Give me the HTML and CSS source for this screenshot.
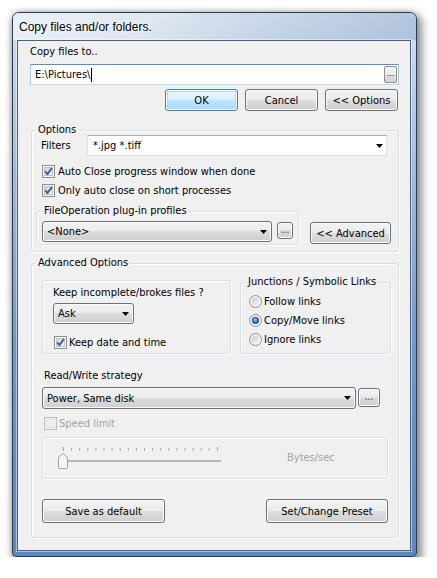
FILE: index.html
```html
<!DOCTYPE html>
<html>
<head>
<meta charset="utf-8">
<title>Copy files and/or folders.</title>
<link rel="stylesheet" href="styles.css">
</head>
<body>
<svg class="defs" width="0" height="0" aria-hidden="true">
  <defs>
    <linearGradient id="cbin" x1="0" y1="0" x2="1" y2="1">
      <stop offset="0" stop-color="#cdd1d6"/>
      <stop offset="1" stop-color="#f7f7f7"/>
    </linearGradient>
    <linearGradient id="rdbg" x1="0" y1="0" x2="1" y2="1">
      <stop offset="0" stop-color="#e9e9e9"/>
      <stop offset="1" stop-color="#fdfdfd"/>
    </linearGradient>
    <linearGradient id="rdin" x1="0" y1="0" x2="1" y2="1">
      <stop offset="0" stop-color="#c9cdd2"/>
      <stop offset="1" stop-color="#f4f4f4"/>
    </linearGradient>
    <radialGradient id="rdsel" cx="0.45" cy="0.4" r="0.6">
      <stop offset="0" stop-color="#8fd6f7"/>
      <stop offset="0.45" stop-color="#3c93d0"/>
      <stop offset="1" stop-color="#174a7e"/>
    </radialGradient>
  </defs>
</svg>
<div class="window">
  <div class="titlebar"><span class="title">Copy files and/or folders.</span></div>
  <div class="client">
    <div class="lbl">Copy files to..</div>
    <div class="pathbox"><span>E:\Pictures\</span><span class="caret"></span><span class="browse">...</span></div>
    <div class="btnrow">
      <div class="btn btn-default w73">OK</div>
      <div class="btn w73">Cancel</div>
      <div class="btn w73">&lt;&lt; Options</div>
    </div>

    <div class="group g-options">
      <div class="gtitle">Options</div>
      <div class="filters">
        <span class="flabel">Filters</span>
        <div class="ecombo"><span>*.jpg *.tiff</span><svg class="arrow" width="7" height="4" viewBox="0 0 7 4"><path d="M0 0H7L3.5 4Z" fill="#000"/></svg></div>
      </div>
      <div class="chk chk-first">
        <svg width="13" height="13" viewBox="0 0 13 13"><rect x=".5" y=".5" width="12" height="12" fill="#f6f6f6" stroke="#8e8f8f"/><rect x="2.5" y="2.5" width="8" height="8" fill="url(#cbin)" stroke="#bfc3c8"/><path d="M3.2 6.3 L5.5 9 L9.9 3.1" fill="none" stroke="#3e5b93" stroke-width="1.9"/></svg>
        <span>Auto Close progress window when done</span>
      </div>
      <div class="chk">
        <svg width="13" height="13" viewBox="0 0 13 13"><rect x=".5" y=".5" width="12" height="12" fill="#f6f6f6" stroke="#8e8f8f"/><rect x="2.5" y="2.5" width="8" height="8" fill="url(#cbin)" stroke="#bfc3c8"/><path d="M3.2 6.3 L5.5 9 L9.9 3.1" fill="none" stroke="#3e5b93" stroke-width="1.9"/></svg>
        <span>Only auto close on short processes</span>
      </div>
      <div class="plugrow">
        <div class="group g-plug">
          <div class="gtitle">FileOperation plug-in profiles</div>
          <div class="plugin">
            <div class="combo c-none"><span>&lt;None&gt;</span><svg class="arrow" width="7" height="4" viewBox="0 0 7 4"><path d="M0 0H7L3.5 4Z" fill="#000"/></svg></div>
            <div class="btn dots d-plug">...</div>
          </div>
        </div>
        <div class="btn b-adv">&lt;&lt; Advanced</div>
      </div>
    </div>

    <div class="group g-adv">
      <div class="gtitle">Advanced Options</div>
      <div class="advrow">
        <div class="group g-keep">
          <div class="keeplbl">Keep incomplete/brokes files ?</div>
          <div class="combo c-ask"><span>Ask</span><svg class="arrow" width="7" height="4" viewBox="0 0 7 4"><path d="M0 0H7L3.5 4Z" fill="#000"/></svg></div>
          <div class="chk chk-keep">
            <svg width="13" height="13" viewBox="0 0 13 13"><rect x=".5" y=".5" width="12" height="12" fill="#f6f6f6" stroke="#8e8f8f"/><rect x="2.5" y="2.5" width="8" height="8" fill="url(#cbin)" stroke="#bfc3c8"/><path d="M3.2 6.3 L5.5 9 L9.9 3.1" fill="none" stroke="#3e5b93" stroke-width="1.9"/></svg>
            <span>Keep date and time</span>
          </div>
        </div>
        <div class="group g-junc">
          <div class="gtitle">Junctions / Symbolic Links</div>
          <div class="radio radio-first">
            <svg width="13" height="13" viewBox="0 0 13 13"><circle cx="6.5" cy="6.5" r="6" fill="url(#rdbg)" stroke="#8e8f8f"/><circle cx="6.5" cy="6.5" r="4" fill="url(#rdin)"/></svg>
            <span>Follow links</span>
          </div>
          <div class="radio">
            <svg width="13" height="13" viewBox="0 0 13 13"><circle cx="6.5" cy="6.5" r="6" fill="url(#rdbg)" stroke="#8e8f8f"/><circle cx="6.5" cy="6.5" r="4" fill="url(#rdin)"/><circle cx="6.5" cy="6.5" r="3.3" fill="url(#rdsel)" stroke="#1b4678" stroke-width=".6"/></svg>
            <span>Copy/Move links</span>
          </div>
          <div class="radio">
            <svg width="13" height="13" viewBox="0 0 13 13"><circle cx="6.5" cy="6.5" r="6" fill="url(#rdbg)" stroke="#8e8f8f"/><circle cx="6.5" cy="6.5" r="4" fill="url(#rdin)"/></svg>
            <span>Ignore links</span>
          </div>
        </div>
      </div>
      <div class="rwlbl">Read/Write strategy</div>
      <div class="rwrow">
        <div class="combo c-rw"><span>Power, Same disk</span><svg class="arrow" width="7" height="4" viewBox="0 0 7 4"><path d="M0 0H7L3.5 4Z" fill="#000"/></svg></div>
        <div class="btn dots d-rw">...</div>
      </div>
      <div class="chk chk-speed disabled">
        <svg width="13" height="13" viewBox="0 0 13 13"><rect x=".5" y=".5" width="12" height="12" fill="#f4f4f4" stroke="#bcbcbc"/><rect x="2.5" y="2.5" width="8" height="8" fill="#f0f0f0" stroke="#e0e0e0"/></svg>
        <span>Speed limit</span>
      </div>
      <div class="group g-slider">
        <svg class="slider" width="170" height="30" viewBox="0 0 170 30">
          <g stroke="#a8a8a8" stroke-width="1">
            <line x1="8.5" y1="2" x2="8.5" y2="6"/><line x1="16.6" y1="3" x2="16.6" y2="6"/><line x1="24.7" y1="3" x2="24.7" y2="6"/><line x1="32.8" y1="3" x2="32.8" y2="6"/><line x1="40.9" y1="3" x2="40.9" y2="6"/>
            <line x1="49" y1="3" x2="49" y2="6"/><line x1="57.1" y1="3" x2="57.1" y2="6"/><line x1="65.2" y1="3" x2="65.2" y2="6"/><line x1="73.3" y1="3" x2="73.3" y2="6"/><line x1="81.4" y1="3" x2="81.4" y2="6"/>
            <line x1="89.5" y1="3" x2="89.5" y2="6"/><line x1="97.6" y1="3" x2="97.6" y2="6"/><line x1="105.7" y1="3" x2="105.7" y2="6"/><line x1="113.8" y1="3" x2="113.8" y2="6"/><line x1="121.9" y1="3" x2="121.9" y2="6"/>
            <line x1="130" y1="3" x2="130" y2="6"/><line x1="138.1" y1="3" x2="138.1" y2="6"/><line x1="146.2" y1="3" x2="146.2" y2="6"/><line x1="154.3" y1="3" x2="154.3" y2="6"/><line x1="162.5" y1="2" x2="162.5" y2="6"/>
          </g>
          <rect x="9" y="15" width="157" height="2" fill="#b6b6b6"/>
          <path d="M3.5 12.5 L8 8.5 L12.5 12.5 L12.5 22.5 Q12.5 23.5 11.5 23.5 L4.5 23.5 Q3.5 23.5 3.5 22.5 Z" fill="#f4f4f4" stroke="#a4a4a4"/>
        </svg>
        <span class="bps">Bytes/sec</span>
      </div>
      <div class="bottomrow">
        <div class="btn b-save">Save as default</div>
        <div class="btn b-preset">Set/Change Preset</div>
      </div>
    </div>
  </div>
</div>
</body>
</html>
```

FILE: styles.css
```css
* { box-sizing: border-box; }

body {
  margin: 0;
  background: #ffffff;
  font-family: "DejaVu Sans Condensed", "DejaVu Sans", sans-serif;
  font-size: 11px;
  color: #000;
}

.defs { display: block; width: 0; height: 0; }

.window {
  margin: 12px 0 0 12px;
  width: 405px;
  height: 545px;
  border: 1px solid #2a3c52;
  border-radius: 7px 7px 4px 4px;
  padding: 0 5px 5px 4px;
  display: flex;
  flex-direction: column;
  background:
    linear-gradient(to bottom, #dfe7f1 0px, #c9d7e8 40px, #a3bbd9 160px, #7398c8 330px, #5b86be 545px);
  box-shadow: 3px 4px 9px 2px rgba(0,0,0,0.45), -1px -1px 5px rgba(0,0,0,0.15);
}

.titlebar {
  height: 27px;
  line-height: 28px;
  padding-left: 6px;
  margin: 0 -5px 0 -4px;
  padding-right: 5px;
  border-radius: 6px 6px 0 0;
  background: linear-gradient(to right, rgba(236,241,247,0.9) 0%, rgba(222,231,241,0.7) 35%, rgba(170,192,220,0.4) 65%, rgba(140,168,205,0.5) 100%);
  font-family: "Liberation Sans", sans-serif;
  font-size: 12px;
  color: #000;
}
.title {
  padding-left: 0;
  text-shadow: 0 0 6px #fff, 0 0 3px #fff;
}

.client {
  flex: 1;
  border: 1px solid #4a6281;
  background: #f0f0f0;
  padding: 4px 0 0 12px;
  box-shadow: 0 0 0 1px rgba(255,255,255,0.45);
}

.lbl { line-height: 14px; height: 14px; }

.pathbox {
  margin-top: 5px;
  width: 369px;
  height: 21px;
  display: flex;
  align-items: center;
  padding-left: 4px;
  padding-right: 1px;
  background: #fff;
  border: 1px solid #a9c8e4;
  border-top-color: #5d90c0;
  border-bottom-color: #bcdaef;
}
.caret {
  width: 1px;
  height: 14px;
  background: #000;
  margin-left: 1px;
}
.browse {
  margin-left: auto;
  width: 13px;
  height: 17px;
  border: 1px solid #8f8f8f;
  border-radius: 2px;
  background: linear-gradient(#f4f4f4 0%, #ececec 50%, #dedede 51%, #d3d3d3 100%);
  font-size: 9px;
  line-height: 13px;
  text-align: center;
  color: #222;
}

.btnrow {
  margin-top: 4px;
  width: 368px;
  height: 22px;
  display: flex;
  justify-content: flex-end;
  gap: 7px;
}

.btn {
  height: 22px;
  border: 1px solid #707070;
  border-radius: 3px;
  background: linear-gradient(#f2f2f2 0%, #ebebeb 49%, #dddddd 50%, #cfcfcf 100%);
  box-shadow: inset 0 0 0 1px #fbfbfb;
  display: flex;
  align-items: center;
  justify-content: center;
  white-space: nowrap;
}
.w73 { width: 73px; }
.btn-default {
  border-color: #3c7fb1;
  background: linear-gradient(#eaf6fd 0%, #d9f0fc 49%, #bee6fd 50%, #a7d9f5 100%);
  box-shadow: inset 0 0 0 1px #ffffff, inset 0 0 0 2px #a9dcf6;
}

.group {
  border: 1px solid #d5dfe5;
  border-radius: 3px;
  box-shadow: inset 1px 1px 0 #ffffff, 1px 1px 0 #ffffff;
}
.gtitle {
  width: fit-content;
  margin: -8px 0 0 4px;
  padding: 0 2px;
  line-height: 14px;
  height: 14px;
  background: #f0f0f0;
}

.g-options {
  margin-top: 19px;
  margin-left: 1px;
  width: 368px;
  padding-bottom: 6px;
}

.filters {
  margin-top: -2px;
  height: 21px;
  display: flex;
  align-items: center;
  padding-left: 9px;
}
.flabel { width: 46px; }
.ecombo {
  width: 300px;
  height: 21px;
  display: flex;
  align-items: center;
  padding-left: 5px;
  padding-right: 3px;
  background: #fff;
  border: 1px solid #dbdfe6;
  border-top-color: #abadb3;
}
.arrow { margin-left: auto; flex: none; }

.chk {
  height: 19px;
  display: flex;
  align-items: center;
  gap: 3px;
  padding-left: 10px;
}
.chk svg { flex: none; }
.chk-first { margin-top: 6px; }

.plugrow {
  margin-top: 11px;
  padding-left: 4px;
  display: flex;
  align-items: flex-end;
}
.g-plug {
  width: 263px;
  padding-bottom: 2px;
}
.g-plug .gtitle { margin-left: 5px; }
.plugin {
  margin-top: 3px;
  padding-left: 5px;
  display: flex;
  align-items: flex-start;
}
.combo {
  height: 21px;
  border: 1px solid #707070;
  border-radius: 3px;
  background: linear-gradient(#f2f2f2 0%, #ebebeb 49%, #dddddd 50%, #cfcfcf 100%);
  box-shadow: inset 0 0 0 1px #fbfbfb;
  display: flex;
  align-items: center;
  padding-left: 4px;
  padding-right: 4px;
  white-space: nowrap;
}
.c-none { width: 230px; }
.dots {
  font-size: 10px;
  color: #2a2a6a;
  padding-bottom: 3px;
}
.d-plug {
  width: 16px;
  height: 17px;
  margin-left: 5px;
  margin-top: 1px;
}
.b-adv {
  width: 81px;
  margin-left: 11px;
  margin-bottom: 1px;
}

.g-adv {
  margin-top: 11px;
  margin-left: 1px;
  width: 368px;
  padding-bottom: 14px;
}
.advrow {
  margin-top: 10px;
  padding-left: 10px;
  display: flex;
  align-items: flex-end;
}
.g-keep {
  width: 189px;
  height: 74px;
  padding-left: 10px;
}
.keeplbl {
  margin-top: 5px;
  line-height: 14px;
  height: 14px;
}
.c-ask {
  margin-top: 3px;
  width: 81px;
}
.chk-keep {
  margin-top: 9px;
  padding-left: 1px;
  gap: 2px;
}
.g-junc {
  margin-left: 9px;
  width: 151px;
  height: 72px;
  padding-left: 8px;
}
.g-junc .gtitle { margin-left: -3px; }
.radio {
  height: 19px;
  display: flex;
  align-items: center;
  gap: 2px;
}
.radio svg { flex: none; }
.radio-first { margin-top: 3px; }

.rwlbl {
  margin-top: 15px;
  padding-left: 12px;
  line-height: 14px;
  height: 14px;
}
.rwrow {
  margin-top: 4px;
  padding-left: 10px;
  display: flex;
  align-items: flex-start;
}
.c-rw { width: 314px; height: 22px; }
.d-rw {
  width: 22px;
  height: 19px;
  margin-left: 2px;
  margin-top: 1px;
}
.chk-speed {
  margin-top: 5px;
  padding-left: 12px;
  gap: 2px;
}
.disabled { color: #a3a3a3; }

.g-slider {
  margin-top: 4px;
  margin-left: 10px;
  width: 346px;
  height: 42px;
  display: flex;
  align-items: flex-start;
}
.slider {
  margin-left: 12px;
  margin-top: 7px;
  flex: none;
}
.bps {
  margin-left: 62px;
  margin-top: 13px;
  line-height: 14px;
  color: #a3a3a3;
}

.bottomrow {
  margin-top: 20px;
  padding: 0 10px 0 10px;
  display: flex;
  justify-content: space-between;
}
.b-save { width: 123px; height: 24px; }
.b-preset { width: 122px; height: 24px; }
```
